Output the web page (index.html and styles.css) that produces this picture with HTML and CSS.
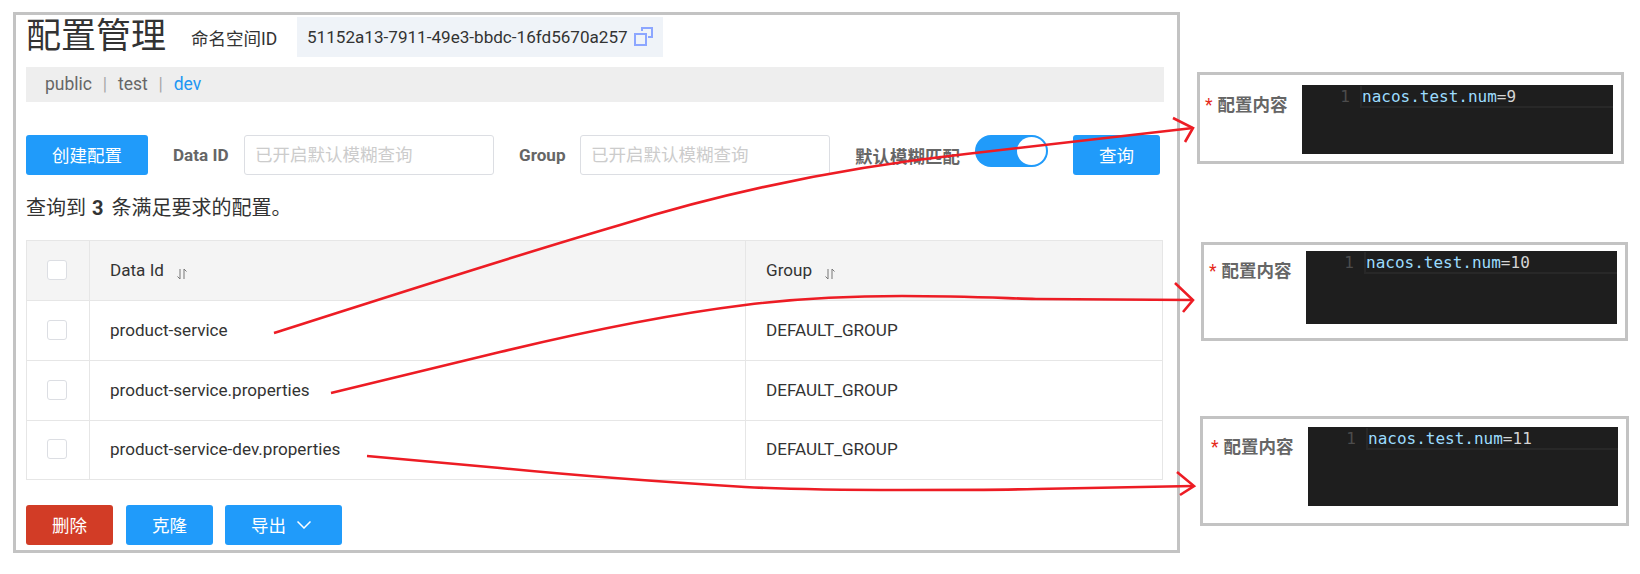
FILE: index.html
```html
<!DOCTYPE html>
<html lang="zh">
<head>
<meta charset="utf-8">
<title>配置管理</title>
<link rel="stylesheet" href="styles.css">
</head>
<body>
<div class="canvas">
  <main class="panel">
    <header class="title-row">
      <h1 class="title">配置管理</h1>
      <span class="ns-label">命名空间ID</span>
      <div class="ns-box">
        <span class="ns-id">51152a13-7911-49e3-bbdc-16fd5670a257</span>
        <svg class="copy" width="20" height="20" viewBox="0 0 20 20" fill="none" stroke="#8ca6ff" stroke-width="2"><rect x="1" y="7" width="11" height="11"/><path d="M8 4V1h10v9h-4"/></svg>
      </div>
    </header>
    <nav class="tabs">
      <span>public</span><i class="sep">|</i><span>test</span><i class="sep">|</i><span class="active">dev</span>
    </nav>
    <form class="filters">
      <button type="button" class="btn btn-create">创建配置</button>
      <label class="lbl lbl-id">Data ID</label>
      <input class="field" placeholder="已开启默认模糊查询">
      <label class="lbl lbl-group">Group</label>
      <input class="field" placeholder="已开启默认模糊查询">
      <label class="lbl lbl-fuzzy">默认模糊匹配</label>
      <div class="toggle"><span class="knob"></span></div>
      <button type="button" class="btn btn-query">查询</button>
    </form>
    <p class="count">查询到 <b>3</b> 条满足要求的配置。</p>
    <table class="grid">
      <colgroup><col class="c1"><col class="c2"><col class="c3"></colgroup>
      <thead>
        <tr>
          <th class="chk"><span class="box"></span></th>
          <th>Data Id<svg class="sort" width="10" height="12" viewBox="0 0 10 12" fill="none" stroke="#777" stroke-width="1"><path d="M3 1v10M.5 8.500 3 11M7 11V1l2.500 2.500"/></svg></th>
          <th>Group<svg class="sort" width="10" height="12" viewBox="0 0 10 12" fill="none" stroke="#777" stroke-width="1"><path d="M3 1v10M.5 8.500 3 11M7 11V1l2.500 2.500"/></svg></th>
        </tr>
      </thead>
      <tbody>
        <tr><td class="chk"><span class="box"></span></td><td>product-service</td><td>DEFAULT_GROUP</td></tr>
        <tr><td class="chk"><span class="box"></span></td><td>product-service.properties</td><td>DEFAULT_GROUP</td></tr>
        <tr class="last"><td class="chk"><span class="box"></span></td><td>product-service-dev.properties</td><td>DEFAULT_GROUP</td></tr>
      </tbody>
    </table>
    <footer class="actions">
      <button type="button" class="btn btn-danger">删除</button>
      <button type="button" class="btn btn-clone">克隆</button>
      <button type="button" class="btn btn-export">导出<svg class="chev" width="14" height="8" viewBox="0 0 14 8" fill="none" stroke="#fff" stroke-width="1.500"><path d="M.5.500 7 7l6.500-6.500"/></svg></button>
    </footer>
  </main>
  <aside class="notes">
    <section class="note note-a">
      <div class="note-label"><em>*</em>配置内容</div>
      <div class="editor"><span class="ln">1</span><div class="line"><span class="key">nacos.test.num</span>=9</div></div>
    </section>
    <section class="note note-b">
      <div class="note-label"><em>*</em>配置内容</div>
      <div class="editor"><span class="ln">1</span><div class="line"><span class="key">nacos.test.num</span>=10</div></div>
    </section>
    <section class="note note-c">
      <div class="note-label"><em>*</em>配置内容</div>
      <div class="editor"><span class="ln">1</span><div class="line"><span class="key">nacos.test.num</span>=11</div></div>
    </section>
  </aside>
  <svg class="arrows" width="1640" height="574" viewBox="0 0 1640 574" fill="none" stroke="#ed1c24" stroke-width="2.600">
    <path d="M274 333C350 309 500 260 620 225C700 200 820 170 966 154L1193 128"/>
    <path d="M1173 118L1193 128L1185 142"/>
    <path d="M331 393L500 352C600 328 680 313 745 305C800 298 850 296 902 296C960 296 1000 298 1036 299L1193 300"/>
    <path d="M1175 283L1193 300L1183 312"/>
    <path d="M367 456L500 468C600 478 680 483 745 487C800 490 850 490 902 490C960 490 1000 490 1036 489L1193 486"/>
    <path d="M1177 472L1194 486L1180 495"/>
  </svg>
</div>
</body>
</html>
```
FILE: styles.css
```css
* { box-sizing: border-box; }
html, body { margin: 0; padding: 0; background: #fff; }
body { font-family: Roboto, "Noto Sans CJK SC", sans-serif; font-size: 17.5px; color: #333; }
.canvas { position: relative; width: 1640px; height: 574px; display: flex; align-items: flex-start; padding: 12px 0 0 13px; overflow: hidden; }
.panel { width: 1167px; height: 541px; border: 3px solid #c3c3c3; padding: 2px 13px 0 10px; flex: none; display: flex; flex-direction: column; }
.title-row { display: flex; align-items: center; height: 40px; }
.title { margin: 0 25px 0 0; font-size: 35px; font-weight: 400; line-height: 40px; width: 140px; white-space: nowrap; }
.ns-label { width: 106px; white-space: nowrap; }
.ns-box { display: flex; align-items: center; height: 40px; width: 366px; background: #eff3f8; padding-left: 10px; white-space: nowrap; }
.ns-id { font-size: 17.1px; }
.copy { margin-left: 6px; flex: none; }
.tabs { margin-top: 10px; height: 35px; width: 1138px; background: #eee; display: flex; align-items: center; padding: 0 0 2px 19px; color: #666; }
.sep { font-style: normal; width: 26px; text-align: center; color: #a8a8a8; font-size: 17.5px; }
.active { color: #2196f3; }
.filters { margin-top: 33px; height: 40px; display: flex; align-items: center; }
.btn { border: 0; border-radius: 3px; background: #209bfa; color: #fff; font: inherit; height: 40px; padding: 0 0 2px; flex: none; }
.btn-create { width: 122px; }
.lbl { font-weight: 700; color: #666; white-space: nowrap; }
.lbl-id { margin-left: 25px; width: 71px; font-size: 17.1px; }
.lbl-group { margin-left: 25px; width: 61px; font-size: 17.1px; }
.lbl-fuzzy { margin-left: 25px; width: 120px; }
.field { width: 250px; height: 40px; border: 1px solid #dcdee3; border-radius: 3px; padding: 0 10px; font: inherit; outline: 0; }
.field::placeholder { color: #ccc; opacity: 1; }
.toggle { width: 73px; height: 32px; border-radius: 16px; background: #209bfa; margin-bottom: 8px; padding: 2px 2px 2px 0; display: flex; justify-content: flex-end; flex: none; }
.knob { width: 29px; height: 28px; border-radius: 50%; background: #fff; }
.btn-query { width: 87px; margin-left: 25px; }
.count { margin: 20px 0 0; font-size: 20px; line-height: 26px; height: 26px; white-space: nowrap; }
.count b { font-weight: 700; margin: 0 3px 0 1px; }
.grid { margin-top: 19px; width: 1136px; table-layout: fixed; border-collapse: collapse; font-size: 17.1px; }
.c1 { width: 63px; }
.c2 { width: 656px; }
.c3 { width: 417px; }
.grid th, .grid td { height: 60px; border: 1.25px solid #e6e6e6; padding: 0 20px 2px; text-align: left; font-weight: 400; white-space: nowrap; }
.grid .last td { height: 59px; }
.grid th { background: #f4f4f4; }
.grid .chk { padding: 0 0 0 20px; }
.box { display: block; width: 20px; height: 20px; border: 1px solid #dcdee3; border-radius: 3px; background: #fff; margin-bottom: 2px; }
.sort { margin-left: 13px; vertical-align: -4px; }
.actions { margin-top: 25px; display: flex; }
.btn-danger { width: 87px; background: #d23c26; }
.btn-clone { width: 87px; margin-left: 13px; }
.btn-export { width: 117px; margin-left: 12px; display: flex; align-items: center; padding-left: 26px; }
.chev { margin-left: 11px; margin-top: 2px; }
.notes { display: flex; flex-direction: column; margin-left: 17px; margin-top: 60px; flex: none; }
.note { position: relative; width: 427px; border: 3px solid #c3c3c3; display: flex; align-items: flex-start; }
.note-a { height: 92px; padding: 10px 0 0 5px; }
.note-b { height: 99px; margin-top: 78px; margin-left: 4px; padding: 6px 0 0 5px; }
.note-c { height: 110px; width: 429px; margin-top: 75px; margin-left: 3px; padding: 8px 0 0 8px; }
.note-label { font-weight: 700; color: #666; width: 97px; white-space: nowrap; flex: none; margin-top: 6px; }
.note-label em { font-style: normal; color: #e5291b; font-weight: 400; margin-right: 5px; }
.editor { display: flex; background: #1e1e1e; width: 311px; font-family: "DejaVu Sans Mono", monospace; font-size: 16px; line-height: 21px; padding-top: 1px; color: #d4d4d4; }
.note-a .editor { height: 69px; }
.note-b .editor { height: 73px; }
.note-c .editor { height: 79px; width: 310px; }
.ln { width: 58px; text-align: right; padding-right: 10px; color: #4c4c4c; flex: none; }
.line { flex: 1; height: 20px; border: solid #282828; border-width: 0 0 2px 2px; box-sizing: content-box; }
.key { color: #9cdcfe; }
.arrows { position: absolute; left: 0; top: 0; pointer-events: none; }
```
